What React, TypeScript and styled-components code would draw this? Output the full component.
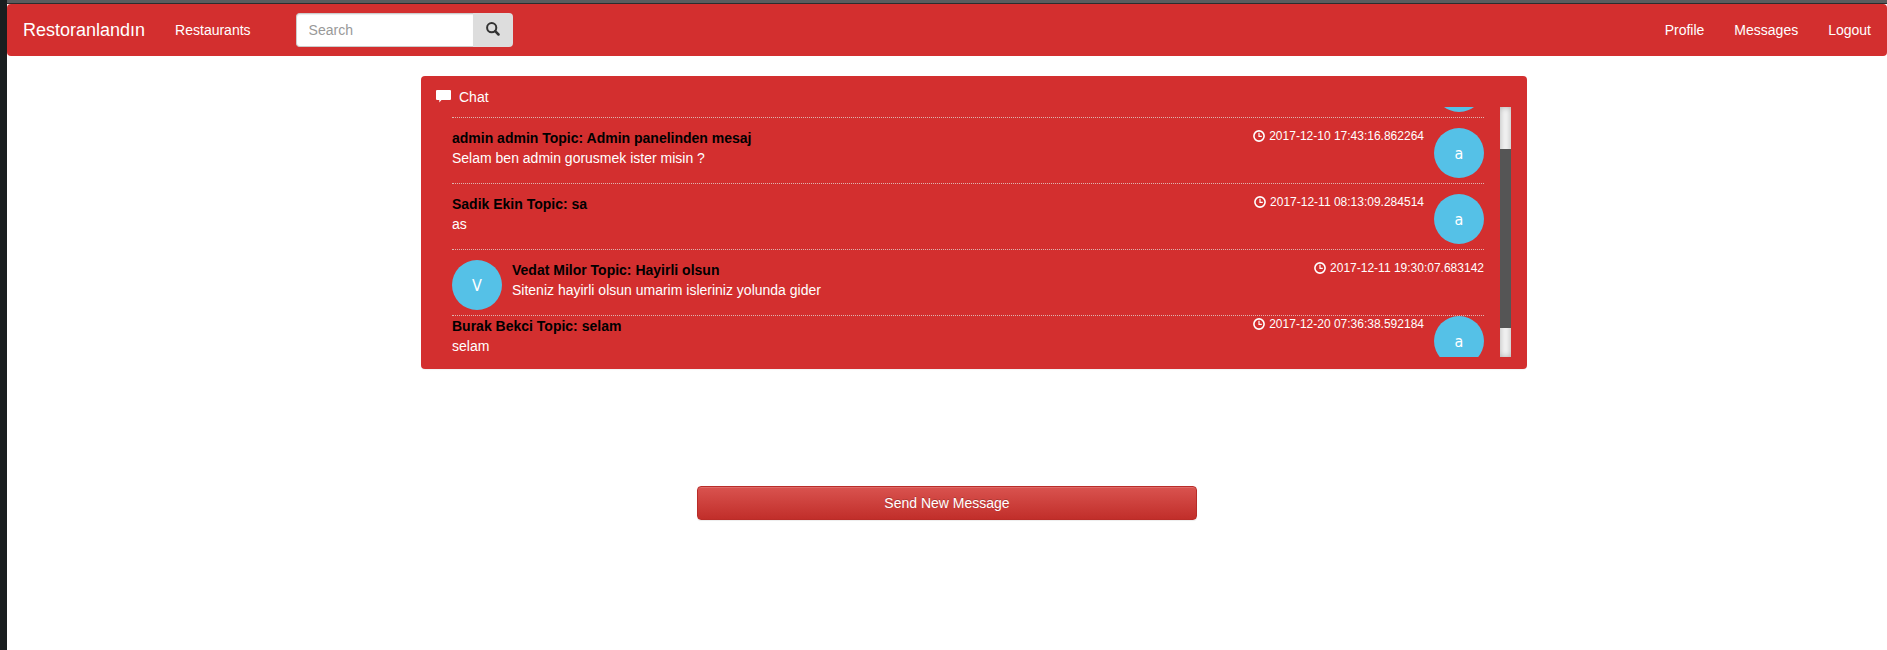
import React from 'react';
import styled, { createGlobalStyle } from 'styled-components';

const GlobalStyle = createGlobalStyle`
  *, *::before, *::after { box-sizing: border-box; }
  body {
    margin: 0;
    background: #fff;
    color: #333;
    font: 14px/20px "Liberation Sans", Arial, sans-serif;
  }
`;

const Frame = styled.div`
  min-height: 100vh;
  border-left: 7px solid #1a1e1f;
`;

const TopEdge = styled.div`
  height: 4px;
  background: #5b5c5e;
  border-bottom: 1px solid #2b2d2e;
`;

const Navbar = styled.nav`
  display: flex;
  align-items: center;
  min-height: 52px;
  padding: 0 1px;
  border-radius: 4px;
  background: #d32f2f;
`;

const Brand = styled.a`
  padding: 15px;
  color: #fff;
  font-size: 18px;
  text-decoration: none;
`;

const NavLink = styled.a`
  padding: 15px;
  color: #fff;
  text-decoration: none;
`;

const NavRight = styled.div`
  display: flex;
  margin-left: auto;
`;

const SearchForm = styled.form`
  display: flex;
  height: 34px;
  margin-left: 30px;
`;

const SearchInput = styled.input`
  width: 177px;
  padding: 6px 12px;
  border: 1px solid #ccc;
  border-right: 0;
  border-radius: 4px 0 0 4px;
  background: #fff;
  color: #555;
  font: inherit;
  box-shadow: inset 0 1px 1px rgba(0, 0, 0, 0.075);
  &::placeholder { color: #999; opacity: 1; }
`;

const SearchButton = styled.button`
  display: flex;
  align-items: center;
  justify-content: center;
  width: 40px;
  padding: 0 0 2px;
  border: 0;
  border-radius: 0 4px 4px 0;
  background: #ddd;
  color: #333;
`;

const ChatColumn = styled.main`
  max-width: 1160px;
  margin: 20px auto 0;
  padding-left: 54px;
`;

const Panel = styled.section`
  padding: 1px 16px 12px;
  border-radius: 4px;
  background: #d32f2f;
  color: #fff;
  box-shadow: 0 1px 1px rgba(0, 0, 0, 0.05);
`;

const PanelHeading = styled.h1`
  display: flex;
  align-items: center;
  gap: 8px;
  margin: 0 0 0 -1px;
  padding-top: 10px;
  font: inherit;
`;

const ScrollArea = styled.div`
  display: flex;
  height: 250px;
  overflow: hidden;
`;

const MessageList = styled.ul`
  flex: 1;
  min-width: 0;
  margin: 0;
  padding: 0 16px 0 15px;
  list-style: none;
`;

const Message = styled.li<{ $last?: boolean }>`
  display: flex;
  gap: 10px;
  margin-bottom: ${(p) => (p.$last ? 0 : 10)}px;
  padding-bottom: 5px;
  border-bottom: ${(p) => (p.$last ? '0' : '1px dotted #ddb5b0')};
  ${(p) => p.$last && 'margin-top: -10px;'}
`;

const PreviousMessage = styled.li`
  display: flex;
  flex-direction: column;
  align-items: flex-end;
  justify-content: flex-end;
  height: 11px;
  margin-bottom: 10px;
  padding-bottom: 5px;
  border-bottom: 1px dotted #ddb5b0;
`;

const MessageBody = styled.div`
  flex: 1;
  min-width: 0;
`;

const MessageHead = styled.div`
  display: flex;
  justify-content: space-between;
`;

const Title = styled.strong`
  color: #000;
`;

const Time = styled.time`
  display: flex;
  align-items: center;
  gap: 4px;
  height: 16px;
  font-size: 12px;
`;

const Text = styled.p`
  margin: 0;
`;

const Avatar = styled.span`
  flex: none;
  width: 50px;
  height: 50px;
  border-radius: 50%;
  background: #55c1e7;
  color: #fff;
  font: 16px/52px "DejaVu Sans Condensed", "Liberation Sans", sans-serif;
  text-align: center;
`;

const ScrollTrack = styled.div`
  width: 11px;
  padding-top: 42px;
  background: #f5f5f5;
  box-shadow: inset 0 0 6px rgba(0, 0, 0, 0.3);
`;

const ScrollThumb = styled.div`
  height: 179px;
  background: #555;
`;

const SendRow = styled.div`
  max-width: 500px;
  margin: 117px auto 0;
`;

const SendButton = styled.button`
  display: block;
  width: 100%;
  height: 34px;
  padding: 6px 12px;
  border: 1px solid #b92c28;
  border-radius: 4px;
  background: linear-gradient(to bottom, #d9534f 0%, #c12e2a 100%);
  box-shadow: inset 0 1px 0 rgba(255, 255, 255, 0.15), 0 1px 1px rgba(0, 0, 0, 0.075);
  color: #fff;
  font: inherit;
  text-shadow: 0 -1px 0 rgba(0, 0, 0, 0.2);
`;

const SearchIcon = () => (
  <svg width="14" height="14" viewBox="0 0 14 14" fill="none" stroke="currentColor" aria-hidden="true">
    <circle cx="5.7" cy="5.7" r="4.6" strokeWidth="2" />
    <path d="M9.2 9.2l3.300 3.300" strokeWidth="2.500" strokeLinecap="round" />
  </svg>
);

const CommentIcon = () => (
  <svg width="15" height="14" viewBox="0 0 15 14" fill="currentColor" aria-hidden="true">
    <path d="M1 0h13a1 1 0 0 1 1 1v8a1 1 0 0 1-1 1H5.500L3.300 12.500V10H1a1 1 0 0 1-1-1V1a1 1 0 0 1 1-1z" />
  </svg>
);

const ClockIcon = () => (
  <svg width="12" height="12" viewBox="0 0 12 12" fill="none" stroke="currentColor" aria-hidden="true">
    <circle cx="6" cy="6" r="5.100" strokeWidth="1.600" />
    <path d="M6 2.800V6.300H8.800" strokeWidth="1.200" />
  </svg>
);

interface ChatMessage {
  title: string;
  text: string;
  time: string;
  initial: string;
  incoming?: boolean;
}

const messages: ChatMessage[] = [
  { title: 'admin admin Topic: Admin panelinden mesaj', text: 'Selam ben admin gorusmek ister misin ?', time: '2017-12-10 17:43:16.862264', initial: 'a' },
  { title: 'Sadik Ekin Topic: sa', text: 'as', time: '2017-12-11 08:13:09.284514', initial: 'a' },
  { title: 'Vedat Milor Topic: Hayirli olsun', text: 'Siteniz hayirli olsun umarim isleriniz yolunda gider', time: '2017-12-11 19:30:07.683142', initial: 'V', incoming: true },
  { title: 'Burak Bekci Topic: selam', text: 'selam', time: '2017-12-20 07:36:38.592184', initial: 'a' },
];

export default function App() {
  return (
    <Frame>
      <GlobalStyle />
      <TopEdge />
      <Navbar>
        <Brand href="#">Restoranlandın</Brand>
        <NavLink href="#">Restaurants</NavLink>
        <SearchForm role="search">
          <SearchInput type="text" placeholder="Search" aria-label="Search" />
          <SearchButton type="submit" aria-label="Submit search"><SearchIcon /></SearchButton>
        </SearchForm>
        <NavRight>
          <NavLink href="#">Profile</NavLink>
          <NavLink href="#">Messages</NavLink>
          <NavLink href="#">Logout</NavLink>
        </NavRight>
      </Navbar>
      <ChatColumn>
        <Panel>
          <PanelHeading><CommentIcon />Chat</PanelHeading>
          <ScrollArea>
            <MessageList>
              <PreviousMessage><Avatar /></PreviousMessage>
              {messages.map((m, i) => (
                <Message key={m.time} $last={i === messages.length - 1}>
                  {m.incoming && <Avatar>{m.initial}</Avatar>}
                  <MessageBody>
                    <MessageHead>
                      <Title>{m.title}</Title>
                      <Time><ClockIcon />{m.time}</Time>
                    </MessageHead>
                    <Text>{m.text}</Text>
                  </MessageBody>
                  {!m.incoming && <Avatar>{m.initial}</Avatar>}
                </Message>
              ))}
            </MessageList>
            <ScrollTrack><ScrollThumb /></ScrollTrack>
          </ScrollArea>
        </Panel>
      </ChatColumn>
      <SendRow>
        <SendButton type="button">Send New Message</SendButton>
      </SendRow>
    </Frame>
  );
}
